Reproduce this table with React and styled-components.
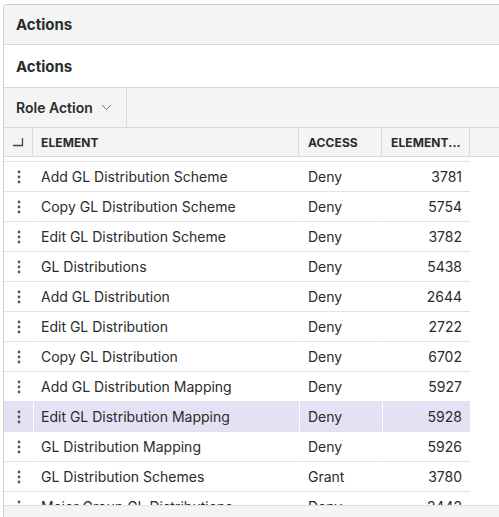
import React from 'react';
import styled, { createGlobalStyle } from 'styled-components';

const GlobalStyle = createGlobalStyle`
  html, body {
    margin: 0;
    padding: 0;
    background: #fff;
    overflow: hidden;
  }
  body {
    font-family: Inter, "Noto Sans", sans-serif;
    color: #2b2b2b;
  }
`;

const rows = [
  ['Add GL Distribution Scheme', 'Deny', 3781],
  ['Copy GL Distribution Scheme', 'Deny', 5754],
  ['Edit GL Distribution Scheme', 'Deny', 3782],
  ['GL Distributions', 'Deny', 5438],
  ['Add GL Distribution', 'Deny', 2644],
  ['Edit GL Distribution', 'Deny', 2722],
  ['Copy GL Distribution', 'Deny', 6702],
  ['Add GL Distribution Mapping', 'Deny', 5927],
  ['Edit GL Distribution Mapping', 'Deny', 5928, true],
  ['GL Distribution Mapping', 'Deny', 5926],
  ['GL Distribution Schemes', 'Grant', 3780],
  ['Major Group GL Distributions', 'Deny', 2442]
];

/**
 * CSS Area
 */

const Panel = styled.div`
  margin: 4px 0 0 3px;
  height: 513px;
  box-sizing: border-box;
  border: 1px solid #cfcfcf;
  border-right: none;
  border-bottom: none;
  border-radius: 4px 0 0 0;
  overflow: hidden;
  display: flex;
  flex-direction: column;
`;

const TitleBar = styled.div`
  flex: none;
  height: 39px;
  display: flex;
  align-items: center;
  padding-left: 12px;
  background: #f4f4f4;
  border-bottom: 1px solid #d9d9d9;
  font-size: 15px;
  font-weight: 700;
`;

const SubTitle = styled(TitleBar)`
  height: 42px;
  background: #fff;
`;

const Toolbar = styled.div`
  flex: none;
  height: 39px;
  display: flex;
  background: #f4f4f4;
  border-bottom: 1px solid #d9d9d9;
`;

const ToolButton = styled.div`
  display: flex;
  align-items: center;
  gap: 8px;
  padding: 0 14px 0 12px;
  border-right: 1px solid #d9d9d9;
  font-size: 14px;
  font-weight: 600;
`;

const Body = styled.div`
  flex: 1;
  min-height: 0;
  overflow: hidden;
`;

const Grid = styled.div`
  display: grid;
  grid-template-columns: 29px 266px 83px 88px 1fr;
`;

const HeadCell = styled.div`
  height: 28px;
  display: flex;
  align-items: center;
  padding: 0 ${p => p.$pad || 0}px;
  justify-content: ${p => (p.$center ? 'center' : 'flex-start')};
  background: #f4f4f4;
  border-right: ${p => (p.$last ? 'none' : '1px solid #d9d9d9')};
  border-bottom: 1px solid #d9d9d9;
  font-size: 12px;
  font-weight: 700;
  letter-spacing: 0.1px;
  white-space: nowrap;
  overflow: hidden;
`;

const Gap = styled.div`
  height: 4px;
  grid-column: 1 / -1;
`;

const Cell = styled.div`
  height: 29px;
  display: flex;
  align-items: center;
  justify-content: ${p => (p.$right ? 'flex-end' : p.$center ? 'center' : 'flex-start')};
  padding: 0 ${p => (p.$right ? 8 : p.$pad || 0)}px;
  border-top: 1px solid #e2e2e2;
  border-left: ${p => (p.$first ? 'none' : '1px solid #fff')};
  background: ${p => (p.$active ? '#e4e1f4' : '#fff')};
  font-size: 14px;
  white-space: nowrap;
  overflow: hidden;
  color: #2b2b2b;
`;

const Filler = styled.div`
  height: 29px;
`;

const Footer = styled.div`
  flex: none;
  height: 11px;
  background: #f4f4f4;
  border-top: 1px solid #e0e0e0;
`;

const Kebab = () => (
  <svg width="4" height="14" viewBox="0 0 4 14">
    <circle cx="2" cy="2" r="1.4" fill="#555" />
    <circle cx="2" cy="7" r="1.4" fill="#555" />
    <circle cx="2" cy="12" r="1.4" fill="#555" />
  </svg>
);

const Chevron = () => (
  <svg width="11" height="7" viewBox="0 0 11 7">
    <path d="M1 1 L5.5 5.5 L10 1" fill="none" stroke="#777" strokeWidth="1" />
  </svg>
);

const CornerBox = () => (
  <svg width="12" height="10" viewBox="0 0 12 10">
    <path d="M1 8.5 H10.5 V1" fill="none" stroke="#444" strokeWidth="1.3" />
  </svg>
);

/**
 * Component
 */

const App = () => (
  <>
    <GlobalStyle />
    <Panel>
      <TitleBar>Actions</TitleBar>
      <SubTitle>Actions</SubTitle>
      <Toolbar>
        <ToolButton>
          Role Action <Chevron />
        </ToolButton>
      </Toolbar>
      <Body>
        <Grid>
          <HeadCell $center>
            <CornerBox />
          </HeadCell>
          <HeadCell $pad={8}>ELEMENT</HeadCell>
          <HeadCell $pad={9}>ACCESS</HeadCell>
          <HeadCell $pad={9}>ELEMENT...</HeadCell>
          <HeadCell $last />
          <Gap />
          {rows.map(([name, access, id, active]) => (
            <React.Fragment key={id}>
              <Cell $first $center $active={active}>
                <Kebab />
              </Cell>
              <Cell $pad={7} $active={active}>{name}</Cell>
              <Cell $pad={8} $active={active}>{access}</Cell>
              <Cell $right $active={active}>{id}</Cell>
              <Filler />
            </React.Fragment>
          ))}
        </Grid>
      </Body>
      <Footer />
    </Panel>
  </>
);

export default App;
